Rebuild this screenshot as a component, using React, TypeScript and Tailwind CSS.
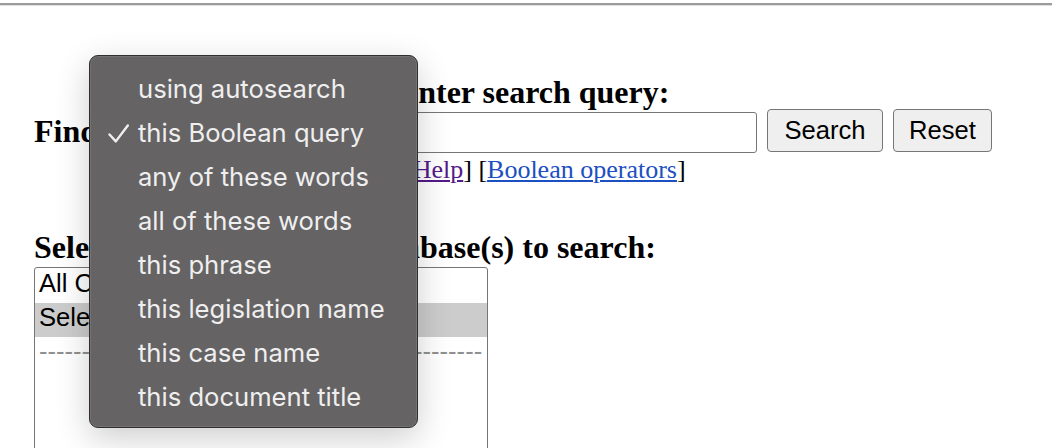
import React from "react";

const serif = { fontFamily: '"Liberation Serif", "Times New Roman", serif' };
const sans = { fontFamily: '"Liberation Sans", Arial, sans-serif' };
const menuFont = { fontFamily: 'Inter, "Noto Sans", sans-serif' };

const items = [
  "using autosearch",
  "this Boolean query",
  "any of these words",
  "all of these words",
  "this phrase",
  "this legislation name",
  "this case name",
  "this document title",
];

export default function App() {
  return (
    <div className="relative h-[448px] w-full overflow-hidden bg-white text-black" style={serif}>
      <div className="pt-[3px]">
        <div className="h-[2px] bg-[#9b9b9b]" />
        <div className="h-px bg-[#dedede]" />
      </div>

      <div className="pl-[34px]">
        <div className="mt-[69px] flex items-start">
          <div className="w-[370px]">
            <div className="mt-[38px] text-[32px] font-bold leading-[37px]">Find</div>
          </div>
          <div>
            <div className="text-[32px] font-bold leading-[34px]">enter search query:</div>
            <div className="flex h-[44px] items-start">
              <div className="mt-[3px] h-[41px] w-[353px] rounded-[3px] border border-[#767676] bg-white" />
              <button
                className="ml-[10px] h-[43px] w-[116px] rounded-[4px] border border-[#767676] bg-[#efefef] text-[25.6px] text-black"
                style={sans}
              >
                Search
              </button>
              <button
                className="ml-[10px] h-[43px] w-[99px] rounded-[4px] border border-[#767676] bg-[#efefef] text-[25.6px] text-black"
                style={sans}
              >
                Reset
              </button>
            </div>
            <div className="mt-[2px] text-[26px] leading-[29px]">
              [<span className="text-[#551a8b] underline">Help</span>] [
              <span className="text-[#1c4fc1] underline">Boolean operators</span>]
            </div>
          </div>
        </div>

        <div className="mt-[45px] text-[32px] font-bold leading-[37px]">
          Select jurisdiction(s) or database(s) to search:
        </div>
        <div
          className="mt-[1px] h-[200px] w-[454px] overflow-hidden rounded-t-[3px] border border-[#767676] bg-white pt-px text-[25.6px]"
          style={sans}
        >
          <div className="h-[34px] pl-[4px] leading-[29px]">All Countries</div>
          <div className="h-[34px] bg-[#cccccc] pl-[4px] leading-[29px]">Selected Databases</div>
          <div className="h-[34px] pl-[4px] pr-[5px]">
            <div className="overflow-hidden whitespace-nowrap leading-[29px] text-[#909090]">
              ----------------------------------------------------------
            </div>
          </div>
        </div>
      </div>

      <div
        className="absolute left-[89px] top-[55px] w-[329px] rounded-[9px] border border-[#2f2f2f] bg-[#656364] pb-[8px] pt-[11px] shadow-[0_10px_34px_rgba(0,0,0,0.2),inset_0_0_0_1px_rgba(255,255,255,0.1)]"
        style={menuFont}
      >
        {items.map((t, i) => (
          <div key={t} className="relative h-[44px] whitespace-nowrap pl-[48px] text-[25.6px] leading-[44px] text-[#efefef]">
            {i === 1 && (
              <svg
                className="absolute left-[18px] top-[13px]"
                width="22"
                height="19"
                viewBox="0 0 22 19"
                fill="none"
              >
                <path
                  d="M1.5 10.5 L7.8 17.4 L19.8 1.5"
                  stroke="#efefef"
                  strokeWidth="2.4"
                  strokeLinecap="round"
                  strokeLinejoin="round"
                />
              </svg>
            )}
            {t}
          </div>
        ))}
      </div>
    </div>
  );
}
